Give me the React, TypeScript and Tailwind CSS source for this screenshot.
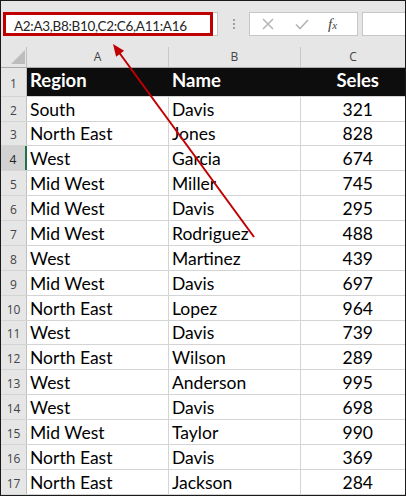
import React from 'react';

type Row = { region: string; name: string; sales: number };

const rows: Row[] = [
  { region: 'South', name: 'Davis', sales: 321 },
  { region: 'North East', name: 'Jones', sales: 828 },
  { region: 'West', name: 'Garcia', sales: 674 },
  { region: 'Mid West', name: 'Miller', sales: 745 },
  { region: 'Mid West', name: 'Davis', sales: 295 },
  { region: 'Mid West', name: 'Rodriguez', sales: 488 },
  { region: 'West', name: 'Martinez', sales: 439 },
  { region: 'Mid West', name: 'Davis', sales: 697 },
  { region: 'North East', name: 'Lopez', sales: 964 },
  { region: 'West', name: 'Davis', sales: 739 },
  { region: 'North East', name: 'Wilson', sales: 289 },
  { region: 'West', name: 'Anderson', sales: 995 },
  { region: 'West', name: 'Davis', sales: 698 },
  { region: 'Mid West', name: 'Taylor', sales: 990 },
  { region: 'North East', name: 'Davis', sales: 369 },
  { region: 'North East', name: 'Jackson', sales: 284 },
];

const cellFont = { fontFamily: 'Lato, "Liberation Sans", sans-serif' };
const uiFont = { fontFamily: '"Open Sans", "Noto Sans", sans-serif' };

export default function App() {
  return (
    <div className="relative w-[406px] h-[496px] border border-[#1a1a1a] bg-white overflow-hidden box-border">
      {/* Formula bar */}
      <div className="h-[44px] bg-[#e6e6e6] flex items-start pt-[11px] pl-[2px]">
        <div className="relative w-[215px] h-[24px] bg-white border border-[#c6c6c6]">
          <div className="absolute left-[-1px] top-[-1px] w-[210px] h-[24px] border-[3px] border-[#c00000]" />
          <span className="absolute left-[10px] top-[3px] text-[13.5px] tracking-[-0.3px] text-[#262626]" style={cellFont}>
            A2:A3,B8:B10,C2:C6,A11:A16
          </span>
        </div>
        <div className="w-[31px] flex flex-col items-center gap-[2px] pt-[7px]">
          <span className="w-[2px] h-[2px] bg-[#a0a0a0]" />
          <span className="w-[2px] h-[2px] bg-[#a0a0a0]" />
          <span className="w-[2px] h-[2px] bg-[#a0a0a0]" />
        </div>
        <div className="w-[109px] h-[24px] bg-white border border-[#c6c6c6] flex items-center">
          <svg width="14" height="14" viewBox="0 0 14 14" className="ml-[11px]">
            <path d="M2 2 L12 12 M12 2 L2 12" stroke="#b5b5b5" strokeWidth="1.5" />
          </svg>
          <svg width="16" height="14" viewBox="0 0 16 14" className="ml-[19px]">
            <path d="M2 7.5 L6 11.5 L14 3" stroke="#b5b5b5" strokeWidth="1.6" fill="none" />
          </svg>
          <span className="ml-[18px] text-[15px] italic text-[#444]" style={{ fontFamily: '"Liberation Serif", serif' }}>
            f<span className="text-[11px]">x</span>
          </span>
        </div>
        <div className="ml-[4px] flex-1 h-[24px] bg-white border border-[#c6c6c6] border-r-0" />
      </div>

      {/* Column headers */}
      <div className="flex h-[23px] bg-[#e6e6e6] border-b border-[#ababab] text-[12px] text-[#444]" style={uiFont}>
        <div className="relative w-[26px] border-r border-[#c0c0c0] mt-[2px]">
          <svg width="14" height="14" viewBox="0 0 14 14" className="absolute left-[10px] bottom-[3px]">
            <path d="M14 0 L14 14 L0 14 Z" fill="#bdbdbd" />
          </svg>
        </div>
        <div className="w-[142px] border-r border-[#c8c8c8] mt-[2px] flex items-center justify-center">A</div>
        <div className="w-[132px] border-r border-[#c8c8c8] mt-[2px] flex items-center justify-center">B</div>
        <div className="flex-1 mt-[2px] flex items-center justify-center">C</div>
      </div>

      {/* Header row 1 */}
      <div className="flex h-[29px] border-b border-[#d4d4d4]">
        <div className="w-[26px] bg-[#e6e6e6] border-r border-[#c0c0c0] flex items-end justify-center pb-[3px] text-[12px] text-[#444]" style={uiFont}>
          1
        </div>
        <div className="flex-1 flex bg-[#0d0d0d] text-white font-bold text-[18.5px]" style={cellFont}>
          <div className="w-[142px] flex items-end pl-[3px] pb-[1px]">Region</div>
          <div className="w-[132px] flex items-end pl-[3px] pb-[1px]">Name</div>
          <div className="flex-1 flex items-end justify-end pr-[26px] pb-[1px]">Seles</div>
        </div>
      </div>

      {/* Data rows */}
      {rows.map((r, i) => {
        const n = i + 2;
        const active = n === 4;
        return (
          <div
            key={n}
            className={`flex border-b border-[#d4d4d4] ${n === 3 || n === 11 ? 'h-[24px]' : 'h-[25px]'}`}
          >
            <div
              className={`w-[26px] border-r flex items-end justify-center pb-[1px] text-[12px] ${
                active ? 'bg-[#d2d2d2] border-r-2 border-r-[#217346] text-[#222]' : 'bg-[#e6e6e6] border-[#c0c0c0] text-[#444]'
              }`}
              style={uiFont}
            >
              {n}
            </div>
            <div className="w-[142px] border-r border-[#d4d4d4] flex items-end pl-[3px] text-[17.5px] leading-[23px] text-black" style={cellFont}>
              {r.region}
            </div>
            <div className="w-[132px] border-r border-[#d4d4d4] flex items-end pl-[3px] text-[17.5px] leading-[23px] text-black" style={cellFont}>
              {r.name}
            </div>
            <div className="flex-1 flex items-end justify-end pr-[32px] text-[17.5px] leading-[23px] text-black" style={cellFont}>
              {r.sales}
            </div>
          </div>
        );
      })}

      {/* Annotation arrow */}
      <svg className="absolute left-0 top-0 pointer-events-none" width="406" height="496" viewBox="0 0 406 496">
        <line x1="253" y1="236" x2="117" y2="50" stroke="#c00000" strokeWidth="2" />
        <polygon points="112,43 123.1,49.75 115.1,55.65" fill="#c00000" />
      </svg>
    </div>
  );
}
